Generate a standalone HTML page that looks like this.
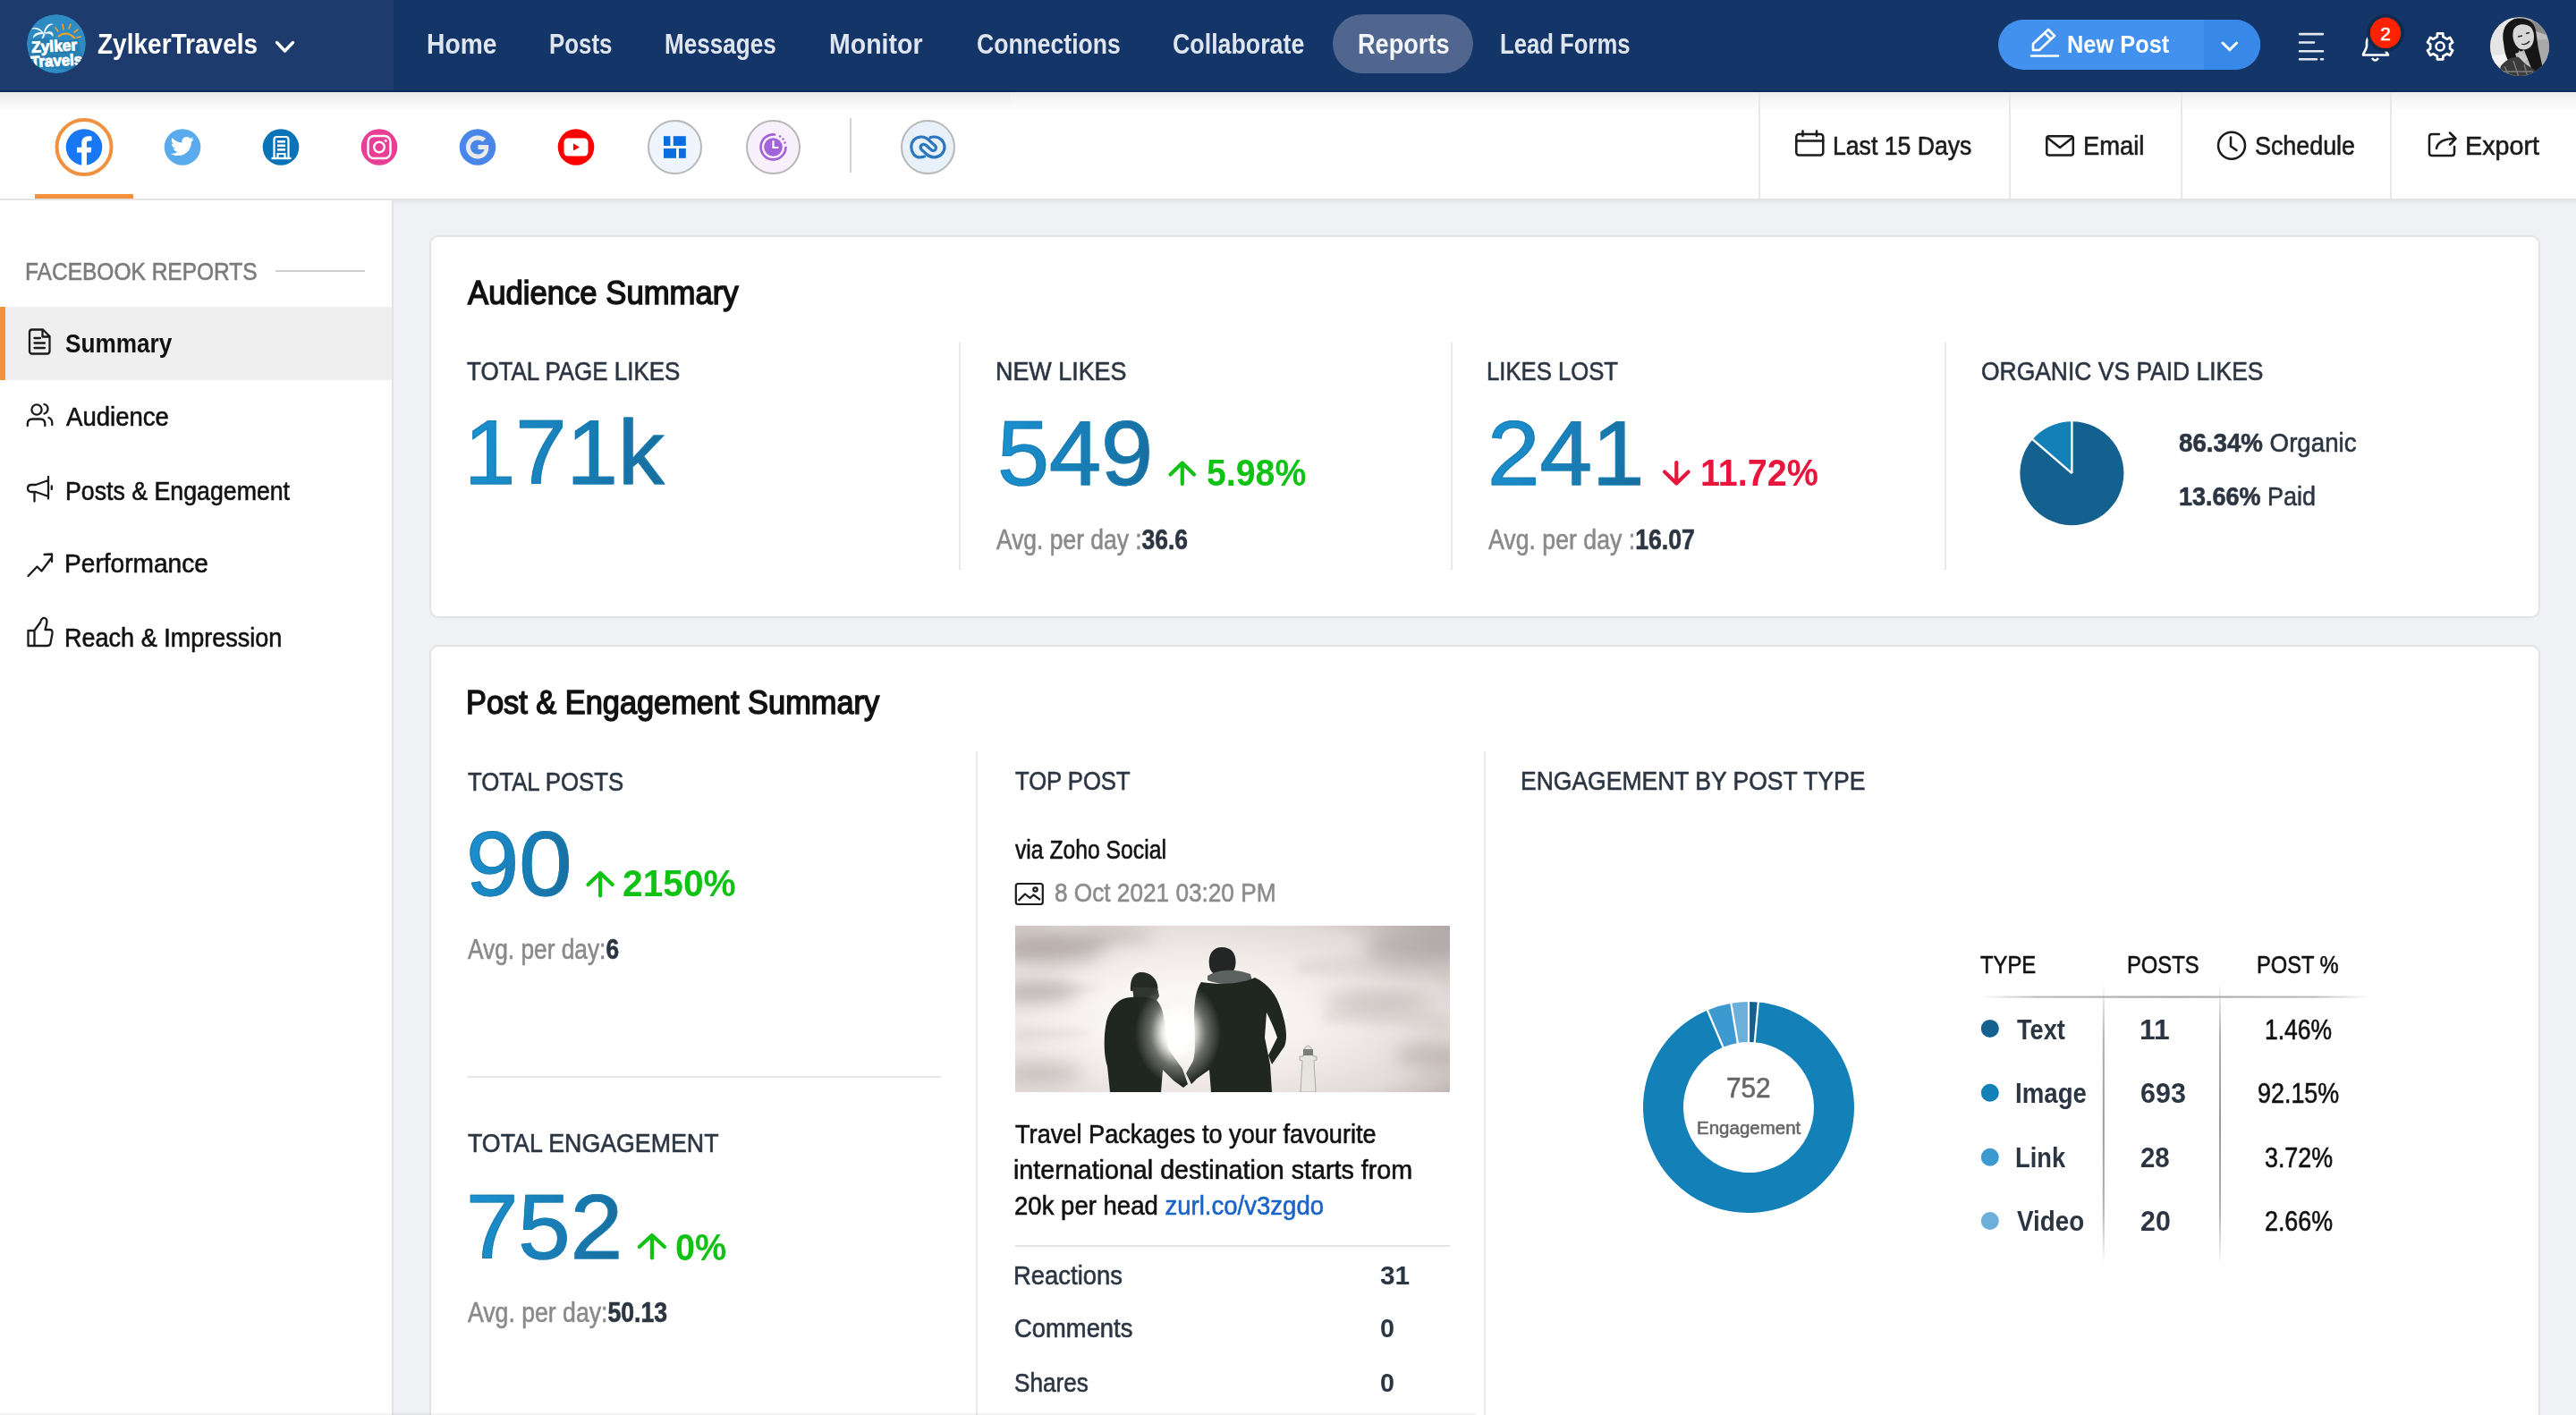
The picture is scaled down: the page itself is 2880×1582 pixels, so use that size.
<!DOCTYPE html>
<html><head><meta charset="utf-8">
<style>
html,body{margin:0;padding:0;}
body{width:2880px;height:1582px;overflow:hidden;position:relative;background:#eff1f5;font-family:"Liberation Sans",sans-serif;}
.a{position:absolute;}
.t{position:absolute;white-space:nowrap;line-height:0;transform-origin:0 0;}
.big{background:linear-gradient(100deg,#1b93d3 0%,#176c9c 100%);-webkit-background-clip:text;background-clip:text;color:transparent;line-height:1.2;-webkit-text-stroke:1.2px rgba(25,125,180,0.9);}
svg{position:absolute;overflow:visible;}
</style></head><body>
<!-- header -->
<div class="a" style="left:0;top:0;width:2880px;height:102px;background:#143568;"></div>
<div class="a" style="left:0;top:0;width:440px;height:102px;background:#1e3b6e;"></div>
<div class="a" style="left:0;top:101px;width:2880px;height:2px;background:#0e2a57;"></div>
<div class="a" style="left:1490px;top:16px;width:157px;height:66px;border-radius:33px;background:#50668f;"></div>
<div class="a" style="left:2234px;top:22px;width:293px;height:56px;border-radius:28px;background:#4291ee;overflow:hidden;"><div class="a" style="left:230px;top:0;width:63px;height:56px;background:#3888ea;"></div></div>
<!-- subheader -->
<div class="a" style="left:0;top:103px;width:2880px;height:119px;background:#fff;"></div>
<div class="a" style="left:0;top:103px;width:1130px;height:22px;background:linear-gradient(#e9e9e9,rgba(255,255,255,0));"></div>
<div class="a" style="left:1130px;top:103px;width:1750px;height:22px;background:linear-gradient(#efefef,rgba(255,255,255,0));"></div>
<div class="a" style="left:0;top:222px;width:2880px;height:2px;background:#e3e3e3;"></div>
<div class="a" style="left:0;top:224px;width:2880px;height:6px;background:linear-gradient(rgba(0,0,0,0.04),rgba(0,0,0,0));"></div>
<div class="a" style="left:1966px;top:103px;width:2px;height:119px;background:#e8e8e8;"></div>
<div class="a" style="left:2246px;top:103px;width:2px;height:119px;background:#e8e8e8;"></div>
<div class="a" style="left:2438px;top:103px;width:2px;height:119px;background:#e8e8e8;"></div>
<div class="a" style="left:2672px;top:103px;width:2px;height:119px;background:#e8e8e8;"></div>
<div class="a" style="left:950px;top:132px;width:2px;height:61px;background:#d2d2d2;"></div>
<div class="a" style="left:39px;top:217px;width:110px;height:5px;background:#f0913f;"></div>
<!-- sidebar -->
<div class="a" style="left:0;top:224px;width:438px;height:1358px;background:#fff;"></div>
<div class="a" style="left:438px;top:224px;width:2px;height:1358px;background:#e2e3e6;"></div>
<div class="a" style="left:308px;top:302px;width:100px;height:2px;background:#cfcfcf;"></div>
<div class="a" style="left:0;top:343px;width:438px;height:82px;background:#efefef;"></div>
<div class="a" style="left:0;top:343px;width:6px;height:82px;background:#f4913c;"></div>
<!-- cards -->
<div class="a" style="left:480px;top:263px;width:2356px;height:424px;background:#fff;border:2px solid #e3e3e3;border-radius:10px;"></div>
<div class="a" style="left:480px;top:721px;width:2356px;height:900px;background:#fff;border:2px solid #e3e3e3;border-radius:10px;"></div>
<div class="a" style="left:1072px;top:383px;width:2px;height:254px;background:#e9e9e9;"></div>
<div class="a" style="left:1622px;top:383px;width:2px;height:254px;background:#e9e9e9;"></div>
<div class="a" style="left:2174px;top:383px;width:2px;height:254px;background:#e9e9e9;"></div>
<div class="a" style="left:1091px;top:840px;width:2px;height:742px;background:#e9e9e9;"></div>
<div class="a" style="left:1659px;top:840px;width:2px;height:742px;background:#e9e9e9;"></div>
<div class="a" style="left:523px;top:1203px;width:529px;height:2px;background:#e6e6e6;"></div>
<div class="a" style="left:1135px;top:1392px;width:486px;height:2px;background:#e2e2e2;"></div>
<div id="botline" class="a" style="left:0;top:1579px;width:1650px;height:3px;background:linear-gradient(rgba(0,0,0,0),rgba(0,0,0,0.07));"></div>
<svg class="a" style="left:0;top:0" width="2880" height="1582" viewBox="0 0 2880 1582">
<defs>
<clipPath id="logoclip"><circle cx="63" cy="49" r="33"/></clipPath>
<clipPath id="avclip"><circle cx="2817" cy="52" r="33"/></clipPath>
<clipPath id="photoclip"><rect x="1135" y="1035" width="486" height="186"/></clipPath>
<radialGradient id="sky" cx="0.4" cy="0.55" r="0.8"><stop offset="0" stop-color="#ffffff"/><stop offset="0.35" stop-color="#f6f1ef"/><stop offset="0.75" stop-color="#e2dad8"/><stop offset="1" stop-color="#b5abaa"/></radialGradient><filter id="blur4" x="-0.5" y="-2" width="2" height="5"><feGaussianBlur stdDeviation="4"/></filter><filter id="blur10" x="-1" y="-2" width="3" height="5"><feGaussianBlur stdDeviation="10"/></filter><filter id="blur8" x="-1" y="-1" width="3" height="3"><feGaussianBlur stdDeviation="7"/></filter>
<radialGradient id="glow" cx="0.5" cy="0.5" r="0.5"><stop offset="0" stop-color="#ffffff" stop-opacity="1"/><stop offset="0.3" stop-color="#fffef9" stop-opacity="0.9"/><stop offset="0.65" stop-color="#f4f2ea" stop-opacity="0.35"/><stop offset="1" stop-color="#ffffff" stop-opacity="0"/></radialGradient>
<linearGradient id="bodyg" x1="0" y1="0" x2="1" y2="0"><stop offset="0" stop-color="#1e2420"/><stop offset="1" stop-color="#323a35"/></linearGradient>
<radialGradient id="avbg" cx="0.3" cy="0.6" r="0.8"><stop offset="0" stop-color="#f2f2f2"/><stop offset="1" stop-color="#9a9a9a"/></radialGradient>
</defs>
<g clip-path="url(#logoclip)"><circle cx="63" cy="49" r="33" fill="#2f8cc2"/>
<path d="M49 37 C44 30 38 29 35 33 C40 31 44 33 48 38 Z M49 37 C50 29 55 25 60 27 C55 28 52 31 50 38 Z M49 37 C42 35 37 38 37 43 C40 39 44 38 49 38 Z M50 37 C56 33 61 36 59 41 C57 37 54 37 50 38 Z M49 37 L46 44 L48 44 L51 37 Z" fill="#ffffff"/>
<path d="M65 41 Q74 33 84 43" fill="none" stroke="#f5a623" stroke-width="2"/>
<path d="M62 31 L65 35 M70 27 L71 33 M79 27 L77 32 M87 33 L83 36 M90 41 L86 42" stroke="#f0a030" stroke-width="1.6" stroke-linecap="round"/>
<path d="M34 44 Q50 41 62 44 Q75 47 88 43 L90 59 Q76 62 62 60 Q48 58 33 61 Z" fill="#2379ad" opacity="0.8"/>
<path d="M30 60 Q48 58 62 61 Q76 63 92 59 L92 76 Q76 79 62 77 Q46 75 30 77 Z" fill="#2379ad" opacity="0.8"/>
<text x="35" y="57.5" font-family="Liberation Sans" font-weight="bold" font-size="17.5" fill="#fff" stroke="#fff" stroke-width="0.9" textLength="51" lengthAdjust="spacingAndGlyphs" transform="rotate(-3 60 50)">Zylker</text>
<text x="34" y="74" font-family="Liberation Sans" font-weight="bold" font-size="17.5" fill="#fff" stroke="#fff" stroke-width="0.9" textLength="58" lengthAdjust="spacingAndGlyphs" transform="rotate(-3 60 66)">Travels</text>
</g>
<path d="M309.5 47.5 L318.5 57 L327.5 47.5" fill="none" stroke="#fff" stroke-width="3.4" stroke-linecap="round" stroke-linejoin="round"/>
<g fill="none" stroke="#fff" stroke-width="2.6" stroke-linejoin="round" stroke-linecap="round"><path d="M2273 56 L2273 49 L2290 33 L2297 40 L2280 56 Z M2286 37 L2293 44"/><path d="M2271 62.5 L2301 62.5"/></g>
<path d="M2485 48 L2492.8 55.8 L2500.6 48" fill="none" stroke="#fff" stroke-width="3" stroke-linecap="round" stroke-linejoin="round"/>
<g stroke="#e4e9f1" stroke-width="2.6" stroke-linecap="round"><path d="M2571 38.1 L2597 38.1 M2571 47.5 L2587 47.5 M2571 57.3 L2597 57.3 M2571 66.2 L2590 66.2 M2595 66.2 L2597 66.2"/></g>
<path d="M2642 61.5 L2670 61.5 C2669 59 2666 57 2665 52 L2665 48 C2665 42 2661 39 2655.5 39 C2650 39 2646 42 2646 48 L2646 52 C2645 57 2642 59 2642 61.5 Z" fill="none" stroke="#fff" stroke-width="2.6" stroke-linejoin="round"/><path d="M2652 65 Q2655.5 70 2659 65" fill="none" stroke="#fff" stroke-width="2.4"/>
<circle cx="2667" cy="36.8" r="21" fill="#0e2a4f"/><circle cx="2667" cy="36.8" r="17.2" fill="#ff2200"/>
<text x="2667" y="44.5" text-anchor="middle" font-family="Liberation Sans" font-size="21" fill="#fff" stroke="#fff" stroke-width="0.5">2</text>
<path d="M2722.60 42.37 L2724.80 41.09 L2725.02 37.42 L2731.18 37.42 L2731.40 41.09 L2733.60 42.37 L2735.81 43.64 L2739.10 42.00 L2742.18 47.33 L2739.11 49.36 L2739.10 51.90 L2739.11 54.44 L2742.18 56.47 L2739.10 61.80 L2735.81 60.16 L2733.60 61.43 L2731.40 62.71 L2731.18 66.38 L2725.02 66.38 L2724.80 62.71 L2722.60 61.43 L2720.39 60.16 L2717.10 61.80 L2714.02 56.47 L2717.09 54.44 L2717.10 51.90 L2717.09 49.36 L2714.02 47.33 L2717.10 42.00 L2720.39 43.64 Z" fill="none" stroke="#fff" stroke-width="2.8" stroke-linejoin="round"/>
<circle cx="2728.1" cy="51.9" r="4.6" fill="none" stroke="#fff" stroke-width="2.6"/>
<g clip-path="url(#avclip)"><rect x="2784" y="19" width="66" height="66" fill="#bdbdbd"/>
<rect x="2784" y="19" width="26" height="66" fill="#e6e6e6"/>
<path d="M2784 62 L2812 60 L2812 72 L2784 74 Z" fill="#f4f4f4"/>
<path d="M2828 22 L2850 30 L2850 40 L2832 34 Z" fill="#8a8a8a"/>
<path d="M2832 45 L2850 44 L2850 70 L2836 72 Z" fill="#a8a8a8"/>
<path d="M2799 48 C2796 34 2802 22 2815 20.5 C2826 19.5 2834 25 2835 34 L2837 48 C2838 58 2842 68 2843 80 L2834 86 C2830 76 2826 66 2822 56 L2812 60 C2814 66 2816 70 2818 74 L2806 70 C2801 64 2800 56 2799 48 Z" fill="#161616"/>
<path d="M2810 34 C2812 27 2822 25 2829 30 C2834 35 2834 44 2831 50 C2828 55 2822 57 2816 54 C2811 50 2808 42 2810 34 Z" fill="#d7d7d7"/>
<path d="M2815 41 L2820 40 M2824 37.5 L2828 36.5 M2819 49 Q2824 51 2828 46" stroke="#2a2a2a" stroke-width="1.3" fill="none"/>
<path d="M2816 56 C2820 60 2824 62 2826 66 L2818 74 Z" fill="#c9c9c9"/>
<path d="M2792 86 L2796 74 C2802 66 2810 63 2816 64 L2824 72 L2834 78 L2836 86 Z" fill="#3b3b3b"/>
<path d="M2800 74 L2806 86 M2810 68 L2816 86 M2822 72 L2826 86 M2797 80 L2832 80" stroke="#7d7d7d" stroke-width="1.4"/>
</g>
<g fill="none" stroke="#1b1b1b" stroke-width="2.5" stroke-linecap="round" stroke-linejoin="round">
<rect x="2008.3" y="150" width="30" height="23.5" rx="3"/><path d="M2008.3 157.5 L2038.3 157.5 M2015.5 146.5 L2015.5 152 M2031 146.5 L2031 152"/>
<rect x="2288.3" y="152.3" width="29.5" height="21.3" rx="2.5"/><path d="M2289 154 L2303 165 L2317 154"/>
<circle cx="2495" cy="162.8" r="15"/><path d="M2494 153.5 L2494 163.5 L2500.5 168"/>
<path d="M2727 150 L2719 150 Q2716 150 2716 153 L2716 171 Q2716 174 2719 174 L2741 174 Q2744 174 2744 171 L2744 164"/><path d="M2724 166 Q2726 155 2745 155 M2739 148.5 L2745.5 155 L2739 161.5"/>
</g>
<circle cx="94" cy="164.5" r="30.5" fill="none" stroke="#f0913f" stroke-width="4"/>
<circle cx="94" cy="164.5" r="20.3" fill="#1977f3"/>
<path d="M91.2 185 L91.2 170.5 L86 170.5 L86 164.7 L91.2 164.7 L91.2 160.3 C91.2 155 94.3 152.3 99 152.3 C100.6 152.3 102 152.5 102.5 152.6 L102.5 157.6 L99.7 157.6 C97.5 157.6 97 158.6 97 160.2 L97 164.7 L102.4 164.7 L101.5 170.5 L97 170.5 L97 185 Z" fill="#fff"/>
<circle cx="204" cy="164.5" r="20.3" fill="#5aabee"/>
<path d="M216.5 155.5 C215.6 155.9 214.6 156.2 213.6 156.3 C214.7 155.7 215.5 154.7 215.9 153.5 C214.9 154.1 213.8 154.5 212.6 154.8 C211.6 153.7 210.2 153.1 208.7 153.1 C205.8 153.1 203.4 155.5 203.4 158.4 C203.4 158.8 203.5 159.2 203.5 159.6 C199.1 159.4 195.2 157.3 192.6 154.1 C192.1 154.9 191.9 155.8 191.9 156.8 C191.9 158.6 192.8 160.3 194.3 161.2 C193.4 161.2 192.6 160.9 191.9 160.5 C191.9 163.1 193.7 165.2 196.1 165.7 C195.3 165.9 194.6 166 193.7 165.8 C194.4 167.9 196.3 169.5 198.7 169.5 C196.9 170.9 194.6 171.8 192.1 171.8 C191.7 171.8 191.2 171.8 190.8 171.7 C193.2 173.2 196 174.1 199 174.1 C208.7 174.1 214 166.1 214 159.1 L214 158.5 C215 157.7 215.8 156.7 216.5 155.5 Z" fill="#fff"/>
<circle cx="314" cy="164.5" r="20.3" fill="#0873b6"/>
<g fill="none" stroke="#fff" stroke-width="2.2"><path d="M306.5 176 L306.5 156 Q306.5 153 309.5 153 L319.5 153 Q322.5 153 322.5 156 L322.5 176"/><path d="M303.5 177 L325.5 177" stroke-width="2.4"/><path d="M310.5 176 L310.5 172 L318.5 172 L318.5 176"/></g>
<g fill="#fff"><rect x="310" y="157" width="9" height="2.6"/><rect x="310" y="161.5" width="9" height="2.6"/><rect x="310" y="166" width="9" height="2.6"/></g>
<circle cx="424" cy="164.5" r="20.3" fill="#e83e96"/>
<rect x="411.5" y="152" width="25" height="25" rx="6.5" fill="none" stroke="#fff" stroke-width="2.4"/><circle cx="424" cy="164.5" r="5.8" fill="none" stroke="#fff" stroke-width="2.4"/><circle cx="431.2" cy="157.3" r="1.5" fill="#fff"/>
<circle cx="534" cy="164.5" r="20.3" fill="#4a86e8"/>
<path d="M546 162 L534.5 162 L534.5 167 L541.5 167 C540.6 170.5 537.8 172.5 534 172.5 C529.3 172.5 526 168.8 526 164.5 C526 160.2 529.3 156.5 534 156.5 C536.2 156.5 538 157.3 539.4 158.6 L543.2 154.8 C540.8 152.7 537.6 151.4 534 151.4 C526.8 151.4 520.9 157.3 520.9 164.5 C520.9 171.7 526.8 177.6 534 177.6 C541.5 177.6 546.3 172.3 546.3 164.8 C546.3 163.8 546.2 162.9 546 162 Z" fill="#e9e9e9"/>
<circle cx="644" cy="164.5" r="20.3" fill="#ff0000"/>
<rect x="630.5" y="154.5" width="27" height="20" rx="4.5" fill="#fff"/><path d="M641 160.5 L641 168.5 L648 164.5 Z" fill="#ff0000"/>
<circle cx="754.5" cy="164.5" r="29.5" fill="#eef5fd" stroke="#b7b7b7" stroke-width="2"/>
<g fill="#0a6ee0"><rect x="742" y="152.2" width="7.4" height="10.8"/><rect x="752.8" y="152.2" width="14" height="10.8"/><rect x="742" y="166" width="14" height="10.8"/><rect x="759" y="166" width="7.8" height="10.8"/></g>
<circle cx="864.5" cy="164.5" r="29.5" fill="#f8f0fc" stroke="#b7b7b7" stroke-width="2"/>
<path d="M866 150.5 A14 14 0 1 0 878.5 165" fill="none" stroke="#a35fd8" stroke-width="2.6" stroke-linecap="round"/>
<circle cx="872" cy="152.5" r="1.3" fill="#a35fd8"/><circle cx="875.5" cy="155.5" r="1.3" fill="#a35fd8"/><circle cx="877.5" cy="159.5" r="1.3" fill="#a35fd8"/>
<circle cx="864.5" cy="164.5" r="10.3" fill="#a364d9"/><path d="M864.5 158 L864.5 165 L869.5 165" fill="none" stroke="#fff" stroke-width="2.2" stroke-linecap="round"/>
<circle cx="1037.5" cy="164.5" r="29.5" fill="#e8f1f9" stroke="#b7b7b7" stroke-width="2"/>
<g fill="none" stroke="#2a76bf" stroke-width="3.2" stroke-linecap="round"><path d="M1033.5 175 C1031 175.8 1030 175.8 1028 175.8 C1023 175.8 1018.8 170.5 1018.8 164.5 C1018.8 158 1023 153 1030 153 C1034.5 153 1037.5 155.5 1040 158 L1045.5 163 C1047.5 165 1046 168.5 1043.5 168.5 C1042.5 168.5 1041.5 168 1040.5 167 L1035.5 162.5 C1034 161 1031 161 1030 162.5 C1028.8 164 1029 166 1030.5 167.5 L1036 172.5 C1038.5 175 1041 175.8 1044.5 175.8 C1051 175.8 1056 170.5 1056 164.5 C1056 158 1051 153 1044.5 153 C1042.5 153 1041 153.3 1040 153.8"/></g>
<g fill="none" stroke="#1b1b1b" stroke-width="2.3" stroke-linejoin="round" stroke-linecap="round">
<path d="M36 368.5 L48 368.5 L55.5 376 L55.5 392.5 Q55.5 395.5 52.5 395.5 L36 395.5 Q33 395.5 33 392.5 L33 371.5 Q33 368.5 36 368.5 Z M47.5 368.5 L47.5 376.5 L55.5 376.5 M38.5 378 L45 378 M38.5 383.5 L50 383.5 M38.5 389 L50 389"/>
<circle cx="41" cy="458" r="5.6"/><path d="M30.8 476 L30.8 474 Q30.8 468.5 36.5 468.5 L45 468.5 Q50.3 468.5 50.3 474 L50.3 476 M49.5 452 Q53.5 453 53.5 457 Q53.5 461 49.5 462.5 M54.5 467 Q58.3 468.5 58.3 473 L58.3 475"/>
<path d="M54 533 L54 557.5 M54 537 L40 542 L35.5 542 Q31 542 31 546 Q31 550 35.5 550 L40 550 L54 555 M38.5 550 L38.5 560.5 M57.8 543.5 L57.8 547"/>
<path d="M31.5 644 L41.5 633.5 L46.5 638.5 L58 623 M49.5 620 L58 619.5 L58 628"/>
<path d="M31.5 705 L38.5 705 L38.5 722 L31.5 722 Z M38.5 705 L45 696 Q46.5 690.5 50 691 Q53.5 692 52 698 L50.5 704 L55.5 704 Q59 704 58.5 708 L56.5 719 Q56 722 52.5 722 L38.5 722"/>
</g>
<path d="M1321.8 541.1 L1321.8 517.6 M1308.5 530.6 L1321.8 517.6 L1335.0 530.6" fill="none" stroke="#0fc214" stroke-width="4.2" stroke-linecap="round" stroke-linejoin="round"/>
<path d="M1874.3 517.1 L1874.3 540.6 M1861.0 527.6 L1874.3 540.6 L1887.6 527.6" fill="none" stroke="#e8163d" stroke-width="4.2" stroke-linecap="round" stroke-linejoin="round"/>
<path d="M671.1 1001.5 L671.1 976.0 M657.5 989.0 L671.1 976.0 L684.7 989.0" fill="none" stroke="#0fc214" stroke-width="4.2" stroke-linecap="round" stroke-linejoin="round"/>
<path d="M728.9 1406.5 L728.9 1381.0 M714.8 1394.0 L728.9 1381.0 L743.0 1394.0" fill="none" stroke="#0fc214" stroke-width="4.2" stroke-linecap="round" stroke-linejoin="round"/>
<path d="M2316.40 529.20 L2316.40 471.20 A58.00 58.00 0 1 1 2272.49 491.30 Z" fill="#14608f"/>
<path d="M2316.40 529.20 L2272.49 491.30 A58.00 58.00 0 0 1 2316.40 471.20 Z" fill="#1380b8"/>
<line x1="2316.40" y1="529.20" x2="2316.40" y2="470.20" stroke="#fff" stroke-width="2.40"/>
<line x1="2316.40" y1="529.20" x2="2271.74" y2="490.65" stroke="#fff" stroke-width="2.40"/>
<path d="M1955.00 1120.00 A118.00 118.00 0 0 1 1965.82 1120.50 L1961.69 1165.31 A73.00 73.00 0 0 0 1955.00 1165.00 Z" fill="#14608f"/>
<path d="M1965.82 1120.50 A118.00 118.00 0 1 1 1908.89 1129.38 L1926.48 1170.80 A73.00 73.00 0 1 0 1961.69 1165.31 Z" fill="#1380b8"/>
<path d="M1908.89 1129.38 A118.00 118.00 0 0 1 1935.32 1121.65 L1942.83 1166.02 A73.00 73.00 0 0 0 1926.48 1170.80 Z" fill="#3d9ad1"/>
<path d="M1935.32 1121.65 A118.00 118.00 0 0 1 1955.00 1120.00 L1955.00 1165.00 A73.00 73.00 0 0 0 1942.83 1166.02 Z" fill="#6cafdb"/>
<line x1="1955.00" y1="1166.00" x2="1955.00" y2="1119.00" stroke="#fff" stroke-width="2.20"/>
<line x1="1961.60" y1="1166.30" x2="1965.91" y2="1119.50" stroke="#fff" stroke-width="2.20"/>
<line x1="1926.87" y1="1171.72" x2="1908.50" y2="1128.46" stroke="#fff" stroke-width="2.20"/>
<line x1="1942.99" y1="1167.01" x2="1935.15" y2="1120.67" stroke="#fff" stroke-width="2.20"/>
<circle cx="2224.8" cy="1149.9" r="10" fill="#14608f"/>
<circle cx="2224.8" cy="1221.8" r="10" fill="#1380b8"/>
<circle cx="2224.8" cy="1293.7" r="10" fill="#3d9ad1"/>
<circle cx="2224.8" cy="1365.0" r="10" fill="#6cafdb"/>
<defs><linearGradient id="hl" x1="0" x2="1"><stop offset="0" stop-color="#bbb" stop-opacity="0"/><stop offset="0.15" stop-color="#bdbdbd"/><stop offset="0.5" stop-color="#a8a8a8"/><stop offset="0.85" stop-color="#bdbdbd"/><stop offset="1" stop-color="#bbb" stop-opacity="0"/></linearGradient>
<linearGradient id="vl" x1="0" y1="0" x2="0" y2="1"><stop offset="0" stop-color="#aaa" stop-opacity="0"/><stop offset="0.2" stop-color="#b0b0b0"/><stop offset="0.5" stop-color="#999"/><stop offset="0.8" stop-color="#b0b0b0"/><stop offset="1" stop-color="#aaa" stop-opacity="0"/></linearGradient></defs>
<rect x="2214" y="1113.5" width="436" height="2.2" fill="url(#hl)"/>
<rect x="2350.8" y="1098" width="2" height="316" fill="url(#vl)"/>
<rect x="2481" y="1098" width="2" height="316" fill="url(#vl)"/>
<g fill="none" stroke="#1b1b1b" stroke-width="2.2" stroke-linejoin="round"><rect x="1135.8" y="988" width="30" height="23" rx="2.5"/><path d="M1138.5 1007 L1146 999.5 L1151.5 1004 L1155.5 1000.5 L1163 1006"/><circle cx="1157.5" cy="994.5" r="2.2"/></g>
<g clip-path="url(#photoclip)">
<rect x="1135" y="1035" width="486" height="186" fill="url(#sky)"/>
<path d="M1135 1050 Q1190 1040 1250 1055 Q1190 1068 1135 1072 Z" fill="#a89e9c" opacity="0.18" filter="url(#blur4)"/>
<path d="M1135 1100 Q1185 1092 1235 1105 Q1180 1118 1135 1118 Z" fill="#a89e9c" opacity="0.18" filter="url(#blur4)"/>
<path d="M1135 1150 Q1180 1145 1225 1155 Q1180 1165 1135 1165 Z" fill="#b0a6a4" opacity="0.18" filter="url(#blur4)"/>
<path d="M1450 1075 Q1530 1062 1621 1080 L1621 1100 Q1530 1090 1450 1090 Z" fill="#b3a9a7" opacity="0.18" filter="url(#blur4)"/>
<path d="M1480 1130 Q1550 1120 1621 1135 L1621 1155 Q1550 1145 1480 1145 Z" fill="#b8aeac" opacity="0.18" filter="url(#blur4)"/>
<g filter="url(#blur10)" opacity="0.55">
<ellipse cx="1175" cy="1060" rx="60" ry="18" fill="#9d9391"/>
<ellipse cx="1160" cy="1110" rx="45" ry="12" fill="#a39a98"/>
<ellipse cx="1240" cy="1045" rx="50" ry="10" fill="#aea5a3"/>
<ellipse cx="1580" cy="1060" rx="55" ry="20" fill="#a1989a"/>
<ellipse cx="1540" cy="1120" rx="60" ry="12" fill="#b3aaa8"/>
<ellipse cx="1600" cy="1180" rx="40" ry="14" fill="#aaa19f"/>
<ellipse cx="1165" cy="1200" rx="45" ry="12" fill="#aea5a3"/>
</g>
<path d="M1264 1108 C1263 1094 1268 1087 1276 1087 C1286 1087 1294 1094 1294.5 1105 Z" fill="#262b28"/>
<path d="M1266 1104 L1294 1104 L1296 1114 L1292 1120 L1268 1120 Z" fill="#2f3531"/>
<path d="M1255 1117 C1262 1114 1280 1113 1293 1118 C1298 1124 1300 1130 1301 1137 C1304 1155 1305 1168 1307 1174 L1322 1195 L1328 1212 L1323 1216 L1312 1208 L1300 1196 L1298 1221 L1241 1221 L1238 1192 C1234 1180 1234 1160 1236 1148 C1238 1132 1245 1122 1255 1117 Z" fill="#202620"/>
<path d="M1352 1080 C1350 1066 1357 1059 1366 1059 C1376 1059 1382 1065 1381.5 1077 C1381 1086 1376 1091 1366 1091 C1358 1091 1353 1087 1352 1080 Z" fill="#222725"/>
<path d="M1350 1091 C1360 1084 1380 1082 1398 1089 L1400 1097 C1385 1102 1362 1101 1350 1096 Z" fill="#59625f"/>
<path d="M1343 1098 C1362 1101 1385 1101 1403 1093 C1418 1100 1427 1112 1432 1128 C1438 1146 1440 1160 1436 1170 L1422 1190 L1418 1180 L1428 1160 C1424 1148 1420 1140 1416 1132 L1414 1160 L1420 1190 L1422 1221 L1354 1221 L1352 1196 L1338 1206 L1332 1212 L1326 1200 L1334 1186 C1337 1176 1336 1160 1335 1140 C1335 1120 1337 1106 1343 1098 Z" fill="#202620"/>
<path d="M1454 1221 L1456 1186 L1453 1185 L1453 1181 L1457 1181 L1458 1173 Q1462 1165 1467 1173 L1468 1181 L1472 1181 L1472 1185 L1469 1186 L1471 1221 Z" fill="#e6e4df" stroke="#9a9c97" stroke-width="0.8"/>
<rect x="1457" y="1173" width="11" height="7" fill="#7a7d78"/>
<ellipse cx="1317" cy="1155" rx="48" ry="58" fill="url(#glow)"/>
<ellipse cx="1317" cy="1153" rx="18" ry="26" fill="#ffffff" opacity="0.95" filter="url(#blur8)"/>
</g>
</svg>
<div id="brand" class="t" style="left:109.46px;top:48.92px;font-size:31.98px;font-weight:bold;color:#ffffff;transform:scaleX(0.8762);">ZylkerTravels</div>
<div id="n_home" class="t" style="left:476.56px;top:48.62px;font-size:30.52px;font-weight:bold;color:#dfe5ef;transform:scaleX(0.9255);">Home</div>
<div id="n_posts" class="t" style="left:614.30px;top:48.62px;font-size:30.52px;font-weight:bold;color:#dfe5ef;transform:scaleX(0.8477);">Posts</div>
<div id="n_msg" class="t" style="left:743.29px;top:48.62px;font-size:30.52px;font-weight:bold;color:#dfe5ef;transform:scaleX(0.8550);">Messages</div>
<div id="n_mon" class="t" style="left:927.15px;top:48.62px;font-size:30.52px;font-weight:bold;color:#dfe5ef;transform:scaleX(0.9340);">Monitor</div>
<div id="n_con" class="t" style="left:1091.98px;top:48.62px;font-size:30.52px;font-weight:bold;color:#dfe5ef;transform:scaleX(0.8700);">Connections</div>
<div id="n_col" class="t" style="left:1311.20px;top:48.62px;font-size:30.52px;font-weight:bold;color:#dfe5ef;transform:scaleX(0.8776);">Collaborate</div>
<div id="n_rep" class="t" style="left:1518.06px;top:48.62px;font-size:30.52px;font-weight:bold;color:#f4f6fa;transform:scaleX(0.8890);">Reports</div>
<div id="n_lead" class="t" style="left:1677.31px;top:48.62px;font-size:30.52px;font-weight:bold;color:#dfe5ef;transform:scaleX(0.8419);">Lead Forms</div>
<div id="newpost" class="t" style="left:2311.19px;top:50.13px;font-size:27.91px;font-weight:bold;color:#ffffff;transform:scaleX(0.9092);">New Post</div>
<div id="a_last" class="t" style="left:2048.81px;top:162.63px;font-size:29.07px;font-weight:normal;color:#1b1b1b;-webkit-text-stroke-width:0.60px;transform:scaleX(0.9163);">Last 15 Days</div>
<div id="a_email" class="t" style="left:2329.12px;top:162.63px;font-size:29.07px;font-weight:normal;color:#1b1b1b;-webkit-text-stroke-width:0.60px;transform:scaleX(0.9420);">Email</div>
<div id="a_sched" class="t" style="left:2521.08px;top:162.63px;font-size:29.07px;font-weight:normal;color:#1b1b1b;-webkit-text-stroke-width:0.60px;transform:scaleX(0.9244);">Schedule</div>
<div id="a_exp" class="t" style="left:2756.02px;top:162.63px;font-size:29.07px;font-weight:normal;color:#1b1b1b;-webkit-text-stroke-width:0.60px;transform:scaleX(0.9878);">Export</div>
<div id="s_head" class="t" style="left:28.33px;top:302.93px;font-size:28.20px;font-weight:normal;color:#7b7b7b;-webkit-text-stroke-width:0.60px;transform:scaleX(0.8695);">FACEBOOK REPORTS</div>
<div id="s_sum" class="t" style="left:73.41px;top:384.03px;font-size:29.94px;font-weight:bold;color:#111;transform:scaleX(0.8747);">Summary</div>
<div id="s_aud" class="t" style="left:74.24px;top:466.13px;font-size:29.94px;font-weight:normal;color:#111;-webkit-text-stroke-width:0.60px;transform:scaleX(0.9206);">Audience</div>
<div id="s_pe" class="t" style="left:72.50px;top:548.63px;font-size:29.94px;font-weight:normal;color:#111;-webkit-text-stroke-width:0.60px;transform:scaleX(0.8926);">Posts &amp; Engagement</div>
<div id="s_perf" class="t" style="left:72.36px;top:630.23px;font-size:29.94px;font-weight:normal;color:#111;-webkit-text-stroke-width:0.60px;transform:scaleX(0.9389);">Performance</div>
<div id="s_reach" class="t" style="left:72.44px;top:712.63px;font-size:29.94px;font-weight:normal;color:#111;-webkit-text-stroke-width:0.60px;transform:scaleX(0.9027);">Reach &amp; Impression</div>
<div id="c1_title" class="t" style="left:522.54px;top:327.96px;font-size:36.77px;font-weight:normal;color:#111;transform:scaleX(0.9433);-webkit-text-stroke:1.5px #111;">Audience Summary</div>
<div id="l_tpl" class="t" style="left:522.05px;top:414.93px;font-size:29.07px;font-weight:normal;color:#2c3542;-webkit-text-stroke-width:0.60px;transform:scaleX(0.8925);">TOTAL PAGE LIKES</div>
<div id="l_new" class="t" style="left:1112.60px;top:415.13px;font-size:29.07px;font-weight:normal;color:#2c3542;-webkit-text-stroke-width:0.60px;transform:scaleX(0.9254);">NEW LIKES</div>
<div id="l_lost" class="t" style="left:1662.22px;top:415.13px;font-size:29.07px;font-weight:normal;color:#2c3542;-webkit-text-stroke-width:0.60px;transform:scaleX(0.8837);">LIKES LOST</div>
<div id="l_org" class="t" style="left:2215.09px;top:414.93px;font-size:29.07px;font-weight:normal;color:#2c3542;-webkit-text-stroke-width:0.60px;transform:scaleX(0.9099);">ORGANIC VS PAID LIKES</div>
<div id="v_171k" class="t big" style="left:518.89px;top:444.99px;font-size:102.18px;font-weight:normal;transform:scaleX(1.0085);">171k</div>
<div id="v_549" class="t big" style="left:1114.86px;top:446.17px;font-size:101.45px;font-weight:normal;transform:scaleX(1.0292);">549</div>
<div id="v_241" class="t big" style="left:1662.81px;top:446.17px;font-size:101.45px;font-weight:normal;transform:scaleX(1.0374);">241</div>
<div id="p_598" class="t" style="left:1349.13px;top:529.39px;font-size:42.15px;font-weight:bold;color:#0fc214;transform:scaleX(0.9312);">5.98%</div>
<div id="p_1172" class="t" style="left:1901.16px;top:529.39px;font-size:42.15px;font-weight:bold;color:#e8163d;transform:scaleX(0.9382);">11.72%</div>
<div id="avg_new" class="t" style="left:1114.00px;top:602.92px;font-size:30.52px;font-weight:normal;color:#8a8a8a;-webkit-text-stroke-width:0.60px;transform:scaleX(0.8659);">Avg. per day :<b style="color:#2c3542">36.6</b></div>
<div id="avg_lost" class="t" style="left:1664.00px;top:602.92px;font-size:30.52px;font-weight:normal;color:#8a8a8a;-webkit-text-stroke-width:0.60px;transform:scaleX(0.8745);">Avg. per day :<b style="color:#2c3542">16.07</b></div>
<div id="org1" class="t" style="left:2435.69px;top:495.18px;font-size:29.80px;font-weight:normal;color:#2c3542;-webkit-text-stroke-width:0.60px;transform:scaleX(0.9292);"><b>86.34%</b> Organic</div>
<div id="org2" class="t" style="left:2435.81px;top:555.28px;font-size:29.80px;font-weight:normal;color:#2c3542;-webkit-text-stroke-width:0.60px;transform:scaleX(0.9049);"><b>13.66%</b> Paid</div>
<div id="c2_title" class="t" style="left:521.28px;top:786.11px;font-size:36.34px;font-weight:normal;color:#111;transform:scaleX(0.9457);-webkit-text-stroke:1.5px #111;">Post &amp; Engagement Summary</div>
<div id="l_tp" class="t" style="left:523.11px;top:873.63px;font-size:29.07px;font-weight:normal;color:#2c3542;-webkit-text-stroke-width:0.60px;transform:scaleX(0.8867);">TOTAL POSTS</div>
<div id="v_90" class="t big" style="left:520.77px;top:905.30px;font-size:101.74px;font-weight:normal;transform:scaleX(1.0475);">90</div>
<div id="p_2150" class="t" style="left:696.02px;top:988.39px;font-size:42.15px;font-weight:bold;color:#0fc214;transform:scaleX(0.9660);">2150%</div>
<div id="avg_tp" class="t" style="left:523.00px;top:1061.12px;font-size:30.52px;font-weight:normal;color:#8a8a8a;-webkit-text-stroke-width:0.60px;transform:scaleX(0.8615);">Avg. per day:<b style="color:#2c3542">6</b></div>
<div id="l_te" class="t" style="left:523.08px;top:1278.33px;font-size:29.07px;font-weight:normal;color:#2c3542;-webkit-text-stroke-width:0.60px;transform:scaleX(0.9208);">TOTAL ENGAGEMENT</div>
<div id="v_752" class="t big" style="left:520.85px;top:1311.30px;font-size:101.74px;font-weight:normal;transform:scaleX(1.0311);">752</div>
<div id="p_0" class="t" style="left:755.11px;top:1395.39px;font-size:42.15px;font-weight:bold;color:#0fc214;transform:scaleX(0.9382);">0%</div>
<div id="avg_te" class="t" style="left:523.00px;top:1467.42px;font-size:30.52px;font-weight:normal;color:#8a8a8a;-webkit-text-stroke-width:0.60px;transform:scaleX(0.8728);">Avg. per day:<b style="color:#2c3542">50.13</b></div>
<div id="l_top" class="t" style="left:1134.84px;top:873.43px;font-size:29.07px;font-weight:normal;color:#2c3542;-webkit-text-stroke-width:0.60px;transform:scaleX(0.8815);">TOP POST</div>
<div id="via" class="t" style="left:1134.86px;top:949.53px;font-size:29.07px;font-weight:normal;color:#111;-webkit-text-stroke-width:0.60px;transform:scaleX(0.8501);">via Zoho Social</div>
<div id="date" class="t" style="left:1179.10px;top:997.73px;font-size:29.07px;font-weight:normal;color:#8c8c8c;-webkit-text-stroke-width:0.60px;transform:scaleX(0.9010);">8 Oct 2021 03:20 PM</div>
<div id="post1" class="t" style="left:1135.06px;top:1267.83px;font-size:29.07px;font-weight:normal;color:#111;-webkit-text-stroke-width:0.60px;transform:scaleX(0.9349);">Travel Packages to your favourite</div>
<div id="post2" class="t" style="left:1133.02px;top:1307.93px;font-size:29.07px;font-weight:normal;color:#111;-webkit-text-stroke-width:0.60px;transform:scaleX(0.9863);">international destination starts from</div>
<div id="post3" class="t" style="left:1134.05px;top:1347.93px;font-size:29.07px;font-weight:normal;color:#111;-webkit-text-stroke-width:0.60px;transform:scaleX(0.9477);">20k per head <span style="color:#1b63c6">zurl.co/v3zgdo</span></div>
<div id="r_react" class="t" style="left:1133.11px;top:1425.93px;font-size:29.07px;font-weight:normal;color:#2c3542;-webkit-text-stroke-width:0.60px;transform:scaleX(0.9444);">Reactions</div>
<div id="r_comm" class="t" style="left:1134.06px;top:1485.43px;font-size:29.07px;font-weight:normal;color:#2c3542;-webkit-text-stroke-width:0.60px;transform:scaleX(0.9424);">Comments</div>
<div id="r_share" class="t" style="left:1134.10px;top:1545.73px;font-size:29.07px;font-weight:normal;color:#2c3542;-webkit-text-stroke-width:0.60px;transform:scaleX(0.9000);">Shares</div>
<div id="r_31" class="t" style="left:1542.78px;top:1425.93px;font-size:29.07px;font-weight:bold;color:#2c3542;transform:scaleX(1.0266);">31</div>
<div id="r_0a" class="t" style="left:1542.77px;top:1485.43px;font-size:29.07px;font-weight:bold;color:#2c3542;transform:scaleX(0.9903);">0</div>
<div id="r_0b" class="t" style="left:1542.77px;top:1545.73px;font-size:29.07px;font-weight:bold;color:#2c3542;transform:scaleX(0.9903);">0</div>
<div id="l_eng" class="t" style="left:1700.18px;top:873.43px;font-size:29.07px;font-weight:normal;color:#2c3542;-webkit-text-stroke-width:0.60px;transform:scaleX(0.9118);">ENGAGEMENT BY POST TYPE</div>
<div id="d_752" class="t" style="left:1930.07px;top:1217.12px;font-size:31.40px;font-weight:normal;color:#666;-webkit-text-stroke-width:0.60px;transform:scaleX(0.9485);">752</div>
<div id="d_eng" class="t" style="left:1896.83px;top:1261.00px;font-size:21.08px;font-weight:normal;color:#666;-webkit-text-stroke-width:0.60px;transform:scaleX(0.9731);">Engagement</div>
<div id="th_type" class="t" style="left:2214.26px;top:1078.93px;font-size:27.33px;font-weight:normal;color:#111;-webkit-text-stroke-width:0.60px;transform:scaleX(0.8721);">TYPE</div>
<div id="th_posts" class="t" style="left:2378.28px;top:1078.93px;font-size:27.33px;font-weight:normal;color:#111;-webkit-text-stroke-width:0.60px;transform:scaleX(0.8689);">POSTS</div>
<div id="th_pct" class="t" style="left:2523.12px;top:1078.93px;font-size:27.33px;font-weight:normal;color:#111;-webkit-text-stroke-width:0.60px;transform:scaleX(0.8658);">POST %</div>
<div id="tr0_a" class="t" style="left:2255.00px;top:1150.52px;font-size:30.52px;font-weight:bold;color:#2c3542;transform:scaleX(0.8917);">Text</div>
<div id="tr0_b" class="t" style="left:2392.29px;top:1150.52px;font-size:30.52px;font-weight:bold;color:#2c3542;transform:scaleX(1.0423);">11</div>
<div id="tr0_c" class="t" style="left:2531.98px;top:1150.52px;font-size:30.52px;font-weight:normal;color:#111;-webkit-text-stroke-width:0.60px;transform:scaleX(0.8677);">1.46%</div>
<div id="tr1_a" class="t" style="left:2253.19px;top:1221.72px;font-size:30.52px;font-weight:bold;color:#2c3542;transform:scaleX(0.9059);">Image</div>
<div id="tr1_b" class="t" style="left:2393.03px;top:1221.72px;font-size:30.52px;font-weight:bold;color:#2c3542;transform:scaleX(0.9983);">693</div>
<div id="tr1_c" class="t" style="left:2524.12px;top:1221.72px;font-size:30.52px;font-weight:normal;color:#111;-webkit-text-stroke-width:0.60px;transform:scaleX(0.8813);">92.15%</div>
<div id="tr2_a" class="t" style="left:2253.21px;top:1293.62px;font-size:30.52px;font-weight:bold;color:#2c3542;transform:scaleX(0.8939);">Link</div>
<div id="tr2_b" class="t" style="left:2393.05px;top:1293.62px;font-size:30.52px;font-weight:bold;color:#2c3542;transform:scaleX(0.9635);">28</div>
<div id="tr2_c" class="t" style="left:2531.98px;top:1293.62px;font-size:30.52px;font-weight:normal;color:#111;-webkit-text-stroke-width:0.60px;transform:scaleX(0.8786);">3.72%</div>
<div id="tr3_a" class="t" style="left:2255.00px;top:1365.02px;font-size:30.52px;font-weight:bold;color:#2c3542;transform:scaleX(0.9123);">Video</div>
<div id="tr3_b" class="t" style="left:2393.02px;top:1365.02px;font-size:30.52px;font-weight:bold;color:#2c3542;transform:scaleX(0.9945);">20</div>
<div id="tr3_c" class="t" style="left:2531.98px;top:1365.02px;font-size:30.52px;font-weight:normal;color:#111;-webkit-text-stroke-width:0.60px;transform:scaleX(0.8786);">2.66%</div>
<script>(function(){var w=window.innerWidth;if(w&&Math.abs(w-2880)>2){document.documentElement.style.zoom=(w/2880);}})();</script>
</body></html>
